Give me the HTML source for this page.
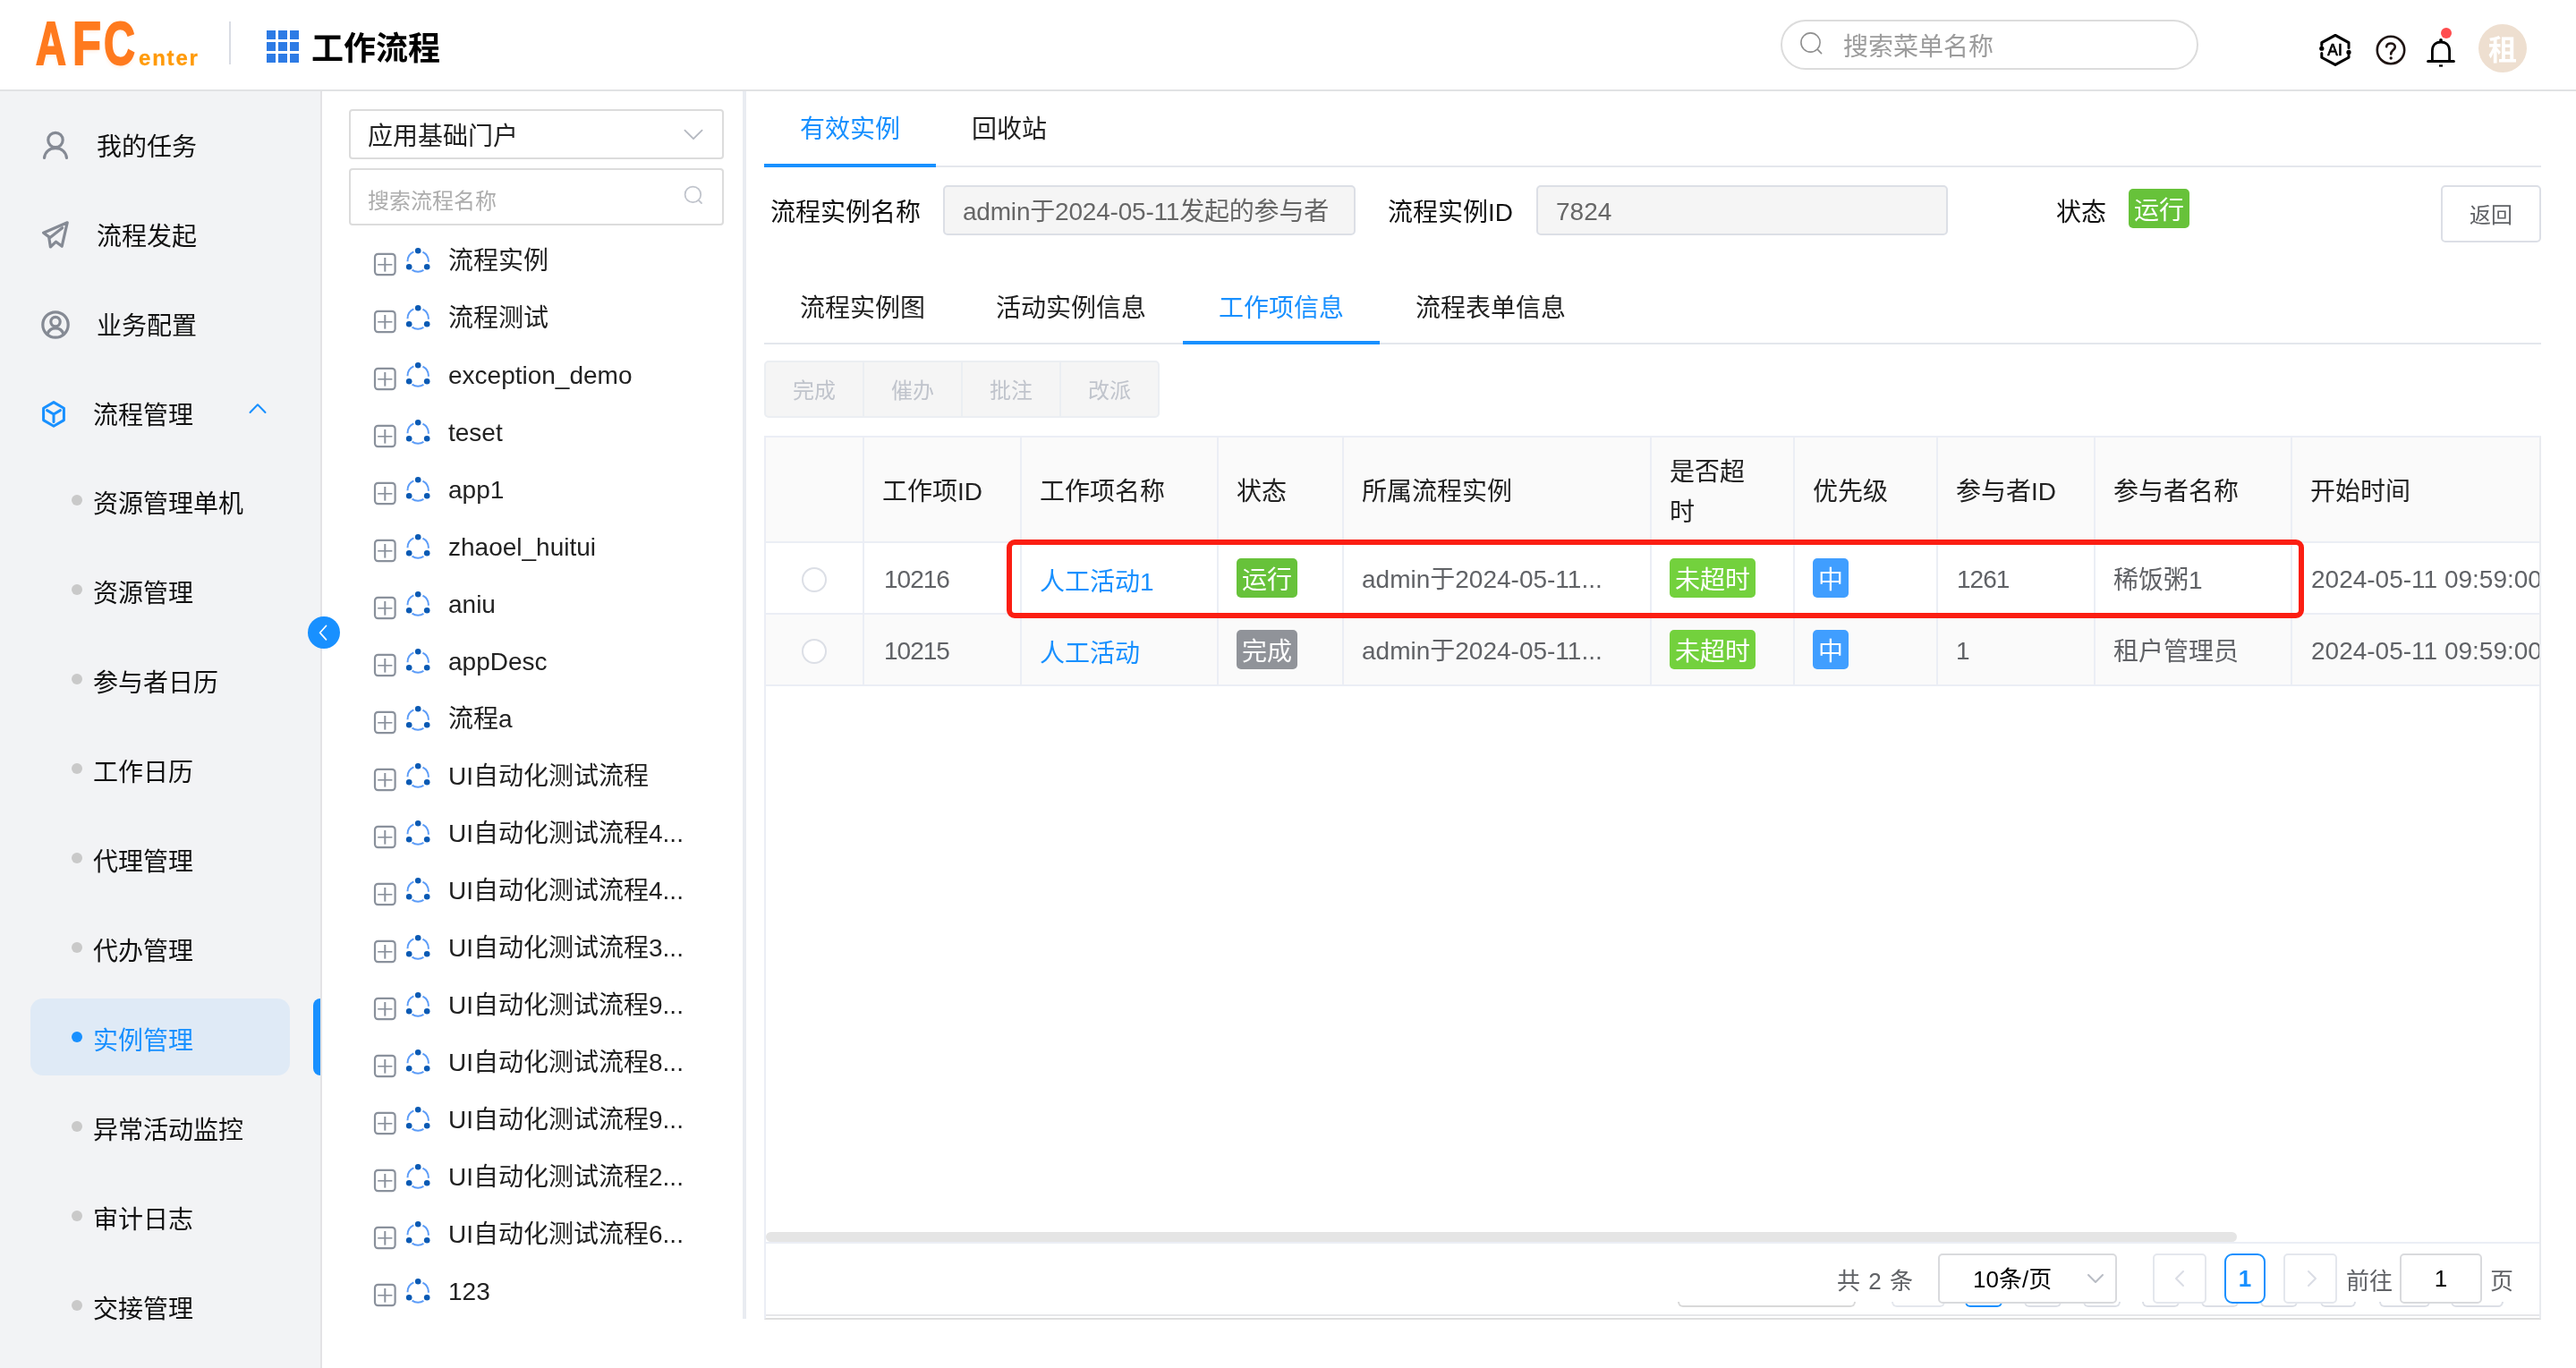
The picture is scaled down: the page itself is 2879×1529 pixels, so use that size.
<!DOCTYPE html>
<html lang="zh-CN">
<head>
<meta charset="utf-8">
<title>工作流程</title>
<style>
*{box-sizing:border-box;margin:0;padding:0}
html,body{width:2879px;height:1529px;overflow:hidden;background:#fff}
body{position:relative;font-family:"Liberation Sans","Noto Sans CJK SC",sans-serif;font-size:28px;color:#222;font-weight:400}
#wrap{position:absolute;left:0;top:0;width:2879px;height:1529px;overflow:hidden;will-change:transform}
.abs{position:absolute}
.t{position:absolute;white-space:nowrap;line-height:40px;height:40px}
/* header */
#hdr{position:absolute;left:0;top:0;width:2879px;height:102px;background:#fff;border-bottom:2px solid #e1e2e4}
#logo{position:absolute;left:0;top:0;width:240px;height:100px}
.lg{display:block;position:absolute;top:9px;font-size:69px;line-height:80px;font-weight:700;color:#ff7a1e;transform-origin:0 0;white-space:nowrap;-webkit-text-stroke:2px #ff7a1e;text-shadow:0 2px 5px rgba(255,122,30,.18)}
#lgA{left:39.5px;transform:scaleX(.68)}#lgF{left:80.8px;transform:scaleX(.76)}#lgC{left:116px;transform:scaleX(.70)}
#logo-enter{display:block;position:absolute;left:155px;top:49px;font-size:24px;line-height:32px;font-weight:700;color:#ff9a0a;letter-spacing:1.8px;white-space:nowrap;-webkit-text-stroke:.3px #ff9a0a}
#hdiv{position:absolute;left:256px;top:24px;width:2px;height:48px;background:#d9dce4}
#grid{position:absolute;left:298px;top:34px;width:36px;height:36px}
#title{position:absolute;left:348px;top:29px;font-size:36px;line-height:52px;font-weight:700;color:#000;white-space:nowrap}
#hsearch{position:absolute;left:1990px;top:22px;width:467px;height:56px;border:2px solid #dcdcdc;border-radius:28px;background:#fff}
#hsearch .ph{position:absolute;left:68px;top:9px;line-height:40px;font-size:28px;color:#9c9c9c;white-space:nowrap}
#avatar{position:absolute;left:2770px;top:27px;width:54px;height:54px;border-radius:50%;background:#eedfd0;color:#fff;font-weight:700;font-size:32px;line-height:58px;text-align:center}
/* sidebar */
#side{position:absolute;left:0;top:102px;width:360px;height:1427px;background:#f2f3f5;border-right:2px solid #e3e3e5}
.mi{margin-top:2px;position:absolute;left:108px;font-size:28px;line-height:40px;color:#111;white-space:nowrap}
.sub{margin-top:2px;position:absolute;left:104px;font-size:28px;line-height:40px;color:#111;white-space:nowrap}
.dot{position:absolute;left:80px;width:12px;height:12px;border-radius:50%;background:#c9c9c9}
#act{position:absolute;left:34px;top:1116px;width:290px;height:86px;border-radius:14px;background:#dfeaf6}
#actbar{position:absolute;left:350px;top:1116px;width:8px;height:86px;border-radius:8px 0 0 8px;background:#1890ff}
#collapse{position:absolute;left:344px;top:689px;width:36px;height:36px;border-radius:50%;background:#1890ff}
/* tree panel */
#tree{position:absolute;left:362px;top:102px;width:472px;height:1372px;background:#fff;border-right:4px solid #e9ecf1}
#sel{position:absolute;left:390px;top:122px;width:419px;height:56px;border:2px solid #dcdcdc;border-radius:4px;background:#fff}
#sel span{position:absolute;left:19px;top:9px;line-height:40px;font-size:28px;color:#222;white-space:nowrap}
#tsearch{position:absolute;left:390px;top:188px;width:419px;height:64px;border:2px solid #dcdcdc;border-radius:4px;background:#fff}
#tsearch span{position:absolute;left:19px;top:15px;line-height:40px;font-size:24px;color:#adadad;white-space:nowrap}
.ti{position:absolute;left:417px;width:400px;height:40px}
.ti .lb{position:absolute;left:84px;top:1px;line-height:40px;font-size:28px;color:#222;white-space:nowrap}
.ti svg{position:absolute;left:0;top:0}
/* main */
.tab{margin-top:2px;position:absolute;font-size:28px;line-height:40px;color:#222;white-space:nowrap}
.blue{color:#1890ff}
.hl{position:absolute;height:2px;background:#e4e7ed}
.bar{position:absolute;height:4px;background:#1890ff}
.lab{margin-top:2px;position:absolute;font-size:28px;line-height:40px;color:#111;white-space:nowrap}
.inp{position:absolute;top:207px;height:56px;border:2px solid #dcdfe6;border-radius:5px;background:#f5f5f5;overflow:hidden}
.inp span{position:absolute;left:20px;top:8px;font-size:28px;line-height:40px;color:#666;white-space:nowrap}
.tag{position:absolute;height:44px;border-radius:5px;color:#fff;font-size:28px;line-height:49px;overflow:hidden;text-align:center;white-space:nowrap}
.g{background:#67c23a}.g2{background:#73d13d}.gr{background:#909399}.b{background:#409eff}
#back{position:absolute;left:2728px;top:207px;width:112px;height:64px;border:2px solid #dcdfe6;border-radius:5px;background:#fff;color:#606266;font-size:24px;line-height:63px;text-align:center}
#btns{position:absolute;left:854px;top:403px;width:442px;height:64px;border:2px solid #ebeef2;border-radius:5px;background:#f5f5f5;display:flex}
#btns div{flex:1;border-right:2px solid #ebeef2;color:#c0c4cc;font-size:24px;line-height:63px;text-align:center}
#btns div:last-child{border-right:none}
/* table */
#tbl{position:absolute;left:854px;top:487px;width:1986px;height:988px;border:2px solid #ebeef5;border-right-color:#e9ebef;border-bottom-color:#dedede;overflow:hidden;background:#fff}
.row{position:absolute;left:0;width:2400px;border-bottom:2px solid #ebeef5}
.c{position:absolute;top:0;height:100%;border-right:2px solid #ebeef5}
.c span{position:absolute;left:20px;white-space:nowrap;font-size:28px;line-height:40px}
.hd .c span{color:#222}
.bd .c span{color:#606266}
.radio{position:absolute;left:40px;top:27px;width:28px;height:28px;border-radius:50%;border:2px solid #dcdfe6;background:#fff}
#red{position:absolute;left:1125px;top:603px;width:1450px;height:88px;border:6px solid #fb1e12;border-radius:9px}
/* pagination */
.pg{position:absolute;top:1401px;height:56px;border:2px solid #dcdfe6;border-radius:5px;background:#fff}
.pt{position:absolute;top:1412px;font-size:26px;line-height:40px;color:#606266;white-space:nowrap;word-spacing:2px}

</style>
</head>
<body>
<div id="wrap">

<div id="hdr">
  <div id="logo"><span class="lg" id="lgA">A</span><span class="lg" id="lgF">F</span><span class="lg" id="lgC">C</span><span id="logo-enter">enter</span></div>
  <div id="hdiv"></div>
  <svg id="grid" viewBox="0 0 36 36" fill="#2d7be5"><rect x="0" y="0" width="10" height="10"/><rect x="13" y="0" width="10" height="10"/><rect x="26" y="0" width="10" height="10"/><rect x="0" y="13" width="10" height="10"/><rect x="13" y="13" width="10" height="10"/><rect x="26" y="13" width="10" height="10"/><rect x="0" y="26" width="10" height="10"/><rect x="13" y="26" width="10" height="10"/><rect x="26" y="26" width="10" height="10"/></svg>
  <div id="title">工作流程</div>
  <div id="hsearch">
    <svg class="abs" style="left:18.5px;top:11px" width="28" height="28" viewBox="0 0 28 28" fill="none" stroke="#8f8f8f" stroke-width="1.6"><circle cx="12.5" cy="12.5" r="10.6"/><path d="M20.4 20.4 L24.6 24.6" stroke-linecap="round"/></svg>
    <span class="ph">搜索菜单名称</span>
  </div>
  <!-- AI icon -->
  <svg class="abs" style="left:2588px;top:34px" width="44" height="44" viewBox="0 0 44 44" fill="none" stroke="#000" stroke-width="3" stroke-linecap="round" stroke-linejoin="round">
    <path d="M6.8 16.5 V13.6 L22 5.4 L37 13.6 V19.5"/>
    <path d="M37 28 V30.2 L22 38.4 L6.8 30.2 V25.5"/>
    <circle cx="6.8" cy="20.2" r="2.6" fill="#000" stroke="none"/>
    <circle cx="37" cy="24.4" r="2.6" fill="#000" stroke="none"/>
    <text x="21.6" y="28.2" text-anchor="middle" font-family="Liberation Sans, sans-serif" font-size="18" font-weight="400" fill="#000" stroke="#000" stroke-width=".7" textLength="16.5" lengthAdjust="spacingAndGlyphs">AI</text>
  </svg>
  <!-- help icon -->
  <svg class="abs" style="left:2654px;top:38px" width="36" height="36" viewBox="0 0 36 36" fill="none" stroke="#1f1412" stroke-width="2.6" stroke-linecap="round" stroke-linejoin="round">
    <circle cx="18" cy="18" r="15.2"/>
    <path d="M13.2 14.2 C13.2 9.2 22.8 9.2 22.8 14.4 C22.8 18.2 18.2 18 18.2 22.4"/>
    <circle cx="18.2" cy="27" r="1.7" fill="#1f1412" stroke="none"/>
  </svg>
  <!-- bell -->
  <svg class="abs" style="left:2708px;top:28px" width="40" height="50" viewBox="0 0 40 50" fill="none" stroke="#000" stroke-width="2.8" stroke-linejoin="round">
    <path d="M10.4 40 V28.6 C10.4 22.6 14.4 19 20 19 C25.6 19 29.6 22.6 29.6 28.6 V40"/>
    <path d="M5.6 40.5 H34.4" stroke-width="3" stroke-linecap="round"/>
    <path d="M18 45.5 H22" stroke-width="2.2"/>
    <circle cx="20" cy="17" r="1.9" fill="#000" stroke="none"/>
    <circle cx="26" cy="9" r="6" fill="#ff4d4f" stroke="none"/>
  </svg>
  <div id="avatar">租</div>
</div>

<div id="side"></div>

<svg class="abs" style="left:44px;top:143px" width="36" height="38" viewBox="0 0 36 38" fill="none" stroke="#858a94" stroke-width="3.2" stroke-linecap="round">
  <circle cx="18" cy="13.5" r="8.2"/>
  <path d="M5.5 33.5 C6.5 26.5 11.5 22.6 18 22.6 C24.5 22.6 29.5 26.5 30.5 33.5"/>
</svg>
<svg class="abs" style="left:44px;top:244px" width="36" height="38" viewBox="0 0 36 38" fill="none" stroke="#858a94" stroke-width="3.2" stroke-linecap="round" stroke-linejoin="round">
  <path d="M31.2 4.8 L4.6 16.2 L10.6 20.6 L12.4 32 L18.6 26.2 L25.2 31.2 Z"/>
  <path d="M12 21.4 L25.6 10.8"/>
</svg>
<svg class="abs" style="left:44px;top:345px" width="36" height="36" viewBox="0 0 36 36" fill="none" stroke="#858a94" stroke-width="3.2" stroke-linecap="round">
  <circle cx="18" cy="18" r="14.2"/>
  <circle cx="18" cy="14.6" r="5.2"/>
  <path d="M9 28.6 C10.4 23.4 13.6 21.8 18 21.8 C22.4 21.8 25.6 23.4 27 28.6"/>
</svg>
<svg class="abs" style="left:44px;top:446px" width="32" height="34" viewBox="0 0 32 34" fill="none" stroke="#1890ff" stroke-width="3" stroke-linecap="round" stroke-linejoin="round">
  <path d="M16 3.6 L27.4 10.2 V23.6 L16 30.2 L4.6 23.6 V10.2 Z"/>
  <path d="M8.6 12.6 L16 17 L23.4 12.6 M16 17 V25.6"/>
</svg>
<svg class="abs" style="left:277px;top:448px" width="22" height="16" viewBox="0 0 22 16" fill="none" stroke="#1890ff" stroke-width="2" stroke-linecap="round" stroke-linejoin="round">
  <path d="M2.5 13 L11 4.2 L19.5 13"/>
</svg>

<div class="mi" style="left:108px;top:143px">我的任务</div>
<div class="mi" style="left:108px;top:243px">流程发起</div>
<div class="mi" style="left:108px;top:343px">业务配置</div>
<div class="mi" style="left:104px;top:443px">流程管理</div>
<div id="act"></div><div id="actbar"></div>
<div class="dot" style="top:553px"></div>
<div class="sub" style="top:542px">资源管理单机</div>
<div class="dot" style="top:653px"></div>
<div class="sub" style="top:642px">资源管理</div>
<div class="dot" style="top:753px"></div>
<div class="sub" style="top:742px">参与者日历</div>
<div class="dot" style="top:853px"></div>
<div class="sub" style="top:842px">工作日历</div>
<div class="dot" style="top:953px"></div>
<div class="sub" style="top:942px">代理管理</div>
<div class="dot" style="top:1053px"></div>
<div class="sub" style="top:1042px">代办管理</div>
<div class="dot" style="top:1153px;background:#1890ff"></div>
<div class="sub blue" style="top:1142px">实例管理</div>
<div class="dot" style="top:1253px"></div>
<div class="sub" style="top:1242px">异常活动监控</div>
<div class="dot" style="top:1353px"></div>
<div class="sub" style="top:1342px">审计日志</div>
<div class="dot" style="top:1453px"></div>
<div class="sub" style="top:1442px">交接管理</div>
<div id="tree"></div>
<div id="sel"><span>应用基础门户</span>
<svg class="abs" style="left:371px;top:19px" width="24" height="16" viewBox="0 0 24 16" fill="none" stroke="#b4b8c0" stroke-width="1.8" stroke-linecap="round" stroke-linejoin="round"><path d="M2.4 2.6 L12 12.2 L21.6 2.6"/></svg></div>
<div id="tsearch"><span>搜索流程名称</span>
<svg class="abs" style="left:371px;top:16px" width="26" height="26" viewBox="0 0 26 26" fill="none" stroke="#c0c4cc" stroke-width="1.8" stroke-linecap="round"><circle cx="11.4" cy="11.4" r="8.8"/><path d="M17.8 17.8 L21 21"/></svg></div>
<div class="ti" style="top:271px"><svg width="70" height="40" viewBox="0 0 70 40" fill="none">
<rect x="2" y="12.8" width="22.6" height="23.4" rx="3.6" stroke="#8a919c" stroke-width="2.2"/>
<path d="M13.3 17 V32.6" stroke="#8a919c" stroke-width="2"/><path d="M5.2 24.8 H21.4" stroke="#8a919c" stroke-width="1.6"/>
<circle cx="50.2" cy="21" r="11.7" stroke="#5c9cf8" stroke-width="2" stroke-dasharray="13.6 10.9" stroke-dashoffset="-5.45" transform="rotate(-90 50.2 21)"/>
<circle cx="50.2" cy="9.3" r="3.3" fill="#0a5ab4"/><circle cx="40.2" cy="27.2" r="3.3" fill="#0a5ab4"/><circle cx="60.2" cy="27.2" r="3.3" fill="#0a5ab4"/>
</svg><span class="lb">流程实例</span></div>
<div class="ti" style="top:335px"><svg width="70" height="40" viewBox="0 0 70 40" fill="none">
<rect x="2" y="12.8" width="22.6" height="23.4" rx="3.6" stroke="#8a919c" stroke-width="2.2"/>
<path d="M13.3 17 V32.6" stroke="#8a919c" stroke-width="2"/><path d="M5.2 24.8 H21.4" stroke="#8a919c" stroke-width="1.6"/>
<circle cx="50.2" cy="21" r="11.7" stroke="#5c9cf8" stroke-width="2" stroke-dasharray="13.6 10.9" stroke-dashoffset="-5.45" transform="rotate(-90 50.2 21)"/>
<circle cx="50.2" cy="9.3" r="3.3" fill="#0a5ab4"/><circle cx="40.2" cy="27.2" r="3.3" fill="#0a5ab4"/><circle cx="60.2" cy="27.2" r="3.3" fill="#0a5ab4"/>
</svg><span class="lb">流程测试</span></div>
<div class="ti" style="top:399px"><svg width="70" height="40" viewBox="0 0 70 40" fill="none">
<rect x="2" y="12.8" width="22.6" height="23.4" rx="3.6" stroke="#8a919c" stroke-width="2.2"/>
<path d="M13.3 17 V32.6" stroke="#8a919c" stroke-width="2"/><path d="M5.2 24.8 H21.4" stroke="#8a919c" stroke-width="1.6"/>
<circle cx="50.2" cy="21" r="11.7" stroke="#5c9cf8" stroke-width="2" stroke-dasharray="13.6 10.9" stroke-dashoffset="-5.45" transform="rotate(-90 50.2 21)"/>
<circle cx="50.2" cy="9.3" r="3.3" fill="#0a5ab4"/><circle cx="40.2" cy="27.2" r="3.3" fill="#0a5ab4"/><circle cx="60.2" cy="27.2" r="3.3" fill="#0a5ab4"/>
</svg><span class="lb">exception_demo</span></div>
<div class="ti" style="top:463px"><svg width="70" height="40" viewBox="0 0 70 40" fill="none">
<rect x="2" y="12.8" width="22.6" height="23.4" rx="3.6" stroke="#8a919c" stroke-width="2.2"/>
<path d="M13.3 17 V32.6" stroke="#8a919c" stroke-width="2"/><path d="M5.2 24.8 H21.4" stroke="#8a919c" stroke-width="1.6"/>
<circle cx="50.2" cy="21" r="11.7" stroke="#5c9cf8" stroke-width="2" stroke-dasharray="13.6 10.9" stroke-dashoffset="-5.45" transform="rotate(-90 50.2 21)"/>
<circle cx="50.2" cy="9.3" r="3.3" fill="#0a5ab4"/><circle cx="40.2" cy="27.2" r="3.3" fill="#0a5ab4"/><circle cx="60.2" cy="27.2" r="3.3" fill="#0a5ab4"/>
</svg><span class="lb">teset</span></div>
<div class="ti" style="top:527px"><svg width="70" height="40" viewBox="0 0 70 40" fill="none">
<rect x="2" y="12.8" width="22.6" height="23.4" rx="3.6" stroke="#8a919c" stroke-width="2.2"/>
<path d="M13.3 17 V32.6" stroke="#8a919c" stroke-width="2"/><path d="M5.2 24.8 H21.4" stroke="#8a919c" stroke-width="1.6"/>
<circle cx="50.2" cy="21" r="11.7" stroke="#5c9cf8" stroke-width="2" stroke-dasharray="13.6 10.9" stroke-dashoffset="-5.45" transform="rotate(-90 50.2 21)"/>
<circle cx="50.2" cy="9.3" r="3.3" fill="#0a5ab4"/><circle cx="40.2" cy="27.2" r="3.3" fill="#0a5ab4"/><circle cx="60.2" cy="27.2" r="3.3" fill="#0a5ab4"/>
</svg><span class="lb">app1</span></div>
<div class="ti" style="top:591px"><svg width="70" height="40" viewBox="0 0 70 40" fill="none">
<rect x="2" y="12.8" width="22.6" height="23.4" rx="3.6" stroke="#8a919c" stroke-width="2.2"/>
<path d="M13.3 17 V32.6" stroke="#8a919c" stroke-width="2"/><path d="M5.2 24.8 H21.4" stroke="#8a919c" stroke-width="1.6"/>
<circle cx="50.2" cy="21" r="11.7" stroke="#5c9cf8" stroke-width="2" stroke-dasharray="13.6 10.9" stroke-dashoffset="-5.45" transform="rotate(-90 50.2 21)"/>
<circle cx="50.2" cy="9.3" r="3.3" fill="#0a5ab4"/><circle cx="40.2" cy="27.2" r="3.3" fill="#0a5ab4"/><circle cx="60.2" cy="27.2" r="3.3" fill="#0a5ab4"/>
</svg><span class="lb">zhaoel_huitui</span></div>
<div class="ti" style="top:655px"><svg width="70" height="40" viewBox="0 0 70 40" fill="none">
<rect x="2" y="12.8" width="22.6" height="23.4" rx="3.6" stroke="#8a919c" stroke-width="2.2"/>
<path d="M13.3 17 V32.6" stroke="#8a919c" stroke-width="2"/><path d="M5.2 24.8 H21.4" stroke="#8a919c" stroke-width="1.6"/>
<circle cx="50.2" cy="21" r="11.7" stroke="#5c9cf8" stroke-width="2" stroke-dasharray="13.6 10.9" stroke-dashoffset="-5.45" transform="rotate(-90 50.2 21)"/>
<circle cx="50.2" cy="9.3" r="3.3" fill="#0a5ab4"/><circle cx="40.2" cy="27.2" r="3.3" fill="#0a5ab4"/><circle cx="60.2" cy="27.2" r="3.3" fill="#0a5ab4"/>
</svg><span class="lb">aniu</span></div>
<div class="ti" style="top:719px"><svg width="70" height="40" viewBox="0 0 70 40" fill="none">
<rect x="2" y="12.8" width="22.6" height="23.4" rx="3.6" stroke="#8a919c" stroke-width="2.2"/>
<path d="M13.3 17 V32.6" stroke="#8a919c" stroke-width="2"/><path d="M5.2 24.8 H21.4" stroke="#8a919c" stroke-width="1.6"/>
<circle cx="50.2" cy="21" r="11.7" stroke="#5c9cf8" stroke-width="2" stroke-dasharray="13.6 10.9" stroke-dashoffset="-5.45" transform="rotate(-90 50.2 21)"/>
<circle cx="50.2" cy="9.3" r="3.3" fill="#0a5ab4"/><circle cx="40.2" cy="27.2" r="3.3" fill="#0a5ab4"/><circle cx="60.2" cy="27.2" r="3.3" fill="#0a5ab4"/>
</svg><span class="lb">appDesc</span></div>
<div class="ti" style="top:783px"><svg width="70" height="40" viewBox="0 0 70 40" fill="none">
<rect x="2" y="12.8" width="22.6" height="23.4" rx="3.6" stroke="#8a919c" stroke-width="2.2"/>
<path d="M13.3 17 V32.6" stroke="#8a919c" stroke-width="2"/><path d="M5.2 24.8 H21.4" stroke="#8a919c" stroke-width="1.6"/>
<circle cx="50.2" cy="21" r="11.7" stroke="#5c9cf8" stroke-width="2" stroke-dasharray="13.6 10.9" stroke-dashoffset="-5.45" transform="rotate(-90 50.2 21)"/>
<circle cx="50.2" cy="9.3" r="3.3" fill="#0a5ab4"/><circle cx="40.2" cy="27.2" r="3.3" fill="#0a5ab4"/><circle cx="60.2" cy="27.2" r="3.3" fill="#0a5ab4"/>
</svg><span class="lb">流程a</span></div>
<div class="ti" style="top:847px"><svg width="70" height="40" viewBox="0 0 70 40" fill="none">
<rect x="2" y="12.8" width="22.6" height="23.4" rx="3.6" stroke="#8a919c" stroke-width="2.2"/>
<path d="M13.3 17 V32.6" stroke="#8a919c" stroke-width="2"/><path d="M5.2 24.8 H21.4" stroke="#8a919c" stroke-width="1.6"/>
<circle cx="50.2" cy="21" r="11.7" stroke="#5c9cf8" stroke-width="2" stroke-dasharray="13.6 10.9" stroke-dashoffset="-5.45" transform="rotate(-90 50.2 21)"/>
<circle cx="50.2" cy="9.3" r="3.3" fill="#0a5ab4"/><circle cx="40.2" cy="27.2" r="3.3" fill="#0a5ab4"/><circle cx="60.2" cy="27.2" r="3.3" fill="#0a5ab4"/>
</svg><span class="lb">UI自动化测试流程</span></div>
<div class="ti" style="top:911px"><svg width="70" height="40" viewBox="0 0 70 40" fill="none">
<rect x="2" y="12.8" width="22.6" height="23.4" rx="3.6" stroke="#8a919c" stroke-width="2.2"/>
<path d="M13.3 17 V32.6" stroke="#8a919c" stroke-width="2"/><path d="M5.2 24.8 H21.4" stroke="#8a919c" stroke-width="1.6"/>
<circle cx="50.2" cy="21" r="11.7" stroke="#5c9cf8" stroke-width="2" stroke-dasharray="13.6 10.9" stroke-dashoffset="-5.45" transform="rotate(-90 50.2 21)"/>
<circle cx="50.2" cy="9.3" r="3.3" fill="#0a5ab4"/><circle cx="40.2" cy="27.2" r="3.3" fill="#0a5ab4"/><circle cx="60.2" cy="27.2" r="3.3" fill="#0a5ab4"/>
</svg><span class="lb">UI自动化测试流程4...</span></div>
<div class="ti" style="top:975px"><svg width="70" height="40" viewBox="0 0 70 40" fill="none">
<rect x="2" y="12.8" width="22.6" height="23.4" rx="3.6" stroke="#8a919c" stroke-width="2.2"/>
<path d="M13.3 17 V32.6" stroke="#8a919c" stroke-width="2"/><path d="M5.2 24.8 H21.4" stroke="#8a919c" stroke-width="1.6"/>
<circle cx="50.2" cy="21" r="11.7" stroke="#5c9cf8" stroke-width="2" stroke-dasharray="13.6 10.9" stroke-dashoffset="-5.45" transform="rotate(-90 50.2 21)"/>
<circle cx="50.2" cy="9.3" r="3.3" fill="#0a5ab4"/><circle cx="40.2" cy="27.2" r="3.3" fill="#0a5ab4"/><circle cx="60.2" cy="27.2" r="3.3" fill="#0a5ab4"/>
</svg><span class="lb">UI自动化测试流程4...</span></div>
<div class="ti" style="top:1039px"><svg width="70" height="40" viewBox="0 0 70 40" fill="none">
<rect x="2" y="12.8" width="22.6" height="23.4" rx="3.6" stroke="#8a919c" stroke-width="2.2"/>
<path d="M13.3 17 V32.6" stroke="#8a919c" stroke-width="2"/><path d="M5.2 24.8 H21.4" stroke="#8a919c" stroke-width="1.6"/>
<circle cx="50.2" cy="21" r="11.7" stroke="#5c9cf8" stroke-width="2" stroke-dasharray="13.6 10.9" stroke-dashoffset="-5.45" transform="rotate(-90 50.2 21)"/>
<circle cx="50.2" cy="9.3" r="3.3" fill="#0a5ab4"/><circle cx="40.2" cy="27.2" r="3.3" fill="#0a5ab4"/><circle cx="60.2" cy="27.2" r="3.3" fill="#0a5ab4"/>
</svg><span class="lb">UI自动化测试流程3...</span></div>
<div class="ti" style="top:1103px"><svg width="70" height="40" viewBox="0 0 70 40" fill="none">
<rect x="2" y="12.8" width="22.6" height="23.4" rx="3.6" stroke="#8a919c" stroke-width="2.2"/>
<path d="M13.3 17 V32.6" stroke="#8a919c" stroke-width="2"/><path d="M5.2 24.8 H21.4" stroke="#8a919c" stroke-width="1.6"/>
<circle cx="50.2" cy="21" r="11.7" stroke="#5c9cf8" stroke-width="2" stroke-dasharray="13.6 10.9" stroke-dashoffset="-5.45" transform="rotate(-90 50.2 21)"/>
<circle cx="50.2" cy="9.3" r="3.3" fill="#0a5ab4"/><circle cx="40.2" cy="27.2" r="3.3" fill="#0a5ab4"/><circle cx="60.2" cy="27.2" r="3.3" fill="#0a5ab4"/>
</svg><span class="lb">UI自动化测试流程9...</span></div>
<div class="ti" style="top:1167px"><svg width="70" height="40" viewBox="0 0 70 40" fill="none">
<rect x="2" y="12.8" width="22.6" height="23.4" rx="3.6" stroke="#8a919c" stroke-width="2.2"/>
<path d="M13.3 17 V32.6" stroke="#8a919c" stroke-width="2"/><path d="M5.2 24.8 H21.4" stroke="#8a919c" stroke-width="1.6"/>
<circle cx="50.2" cy="21" r="11.7" stroke="#5c9cf8" stroke-width="2" stroke-dasharray="13.6 10.9" stroke-dashoffset="-5.45" transform="rotate(-90 50.2 21)"/>
<circle cx="50.2" cy="9.3" r="3.3" fill="#0a5ab4"/><circle cx="40.2" cy="27.2" r="3.3" fill="#0a5ab4"/><circle cx="60.2" cy="27.2" r="3.3" fill="#0a5ab4"/>
</svg><span class="lb">UI自动化测试流程8...</span></div>
<div class="ti" style="top:1231px"><svg width="70" height="40" viewBox="0 0 70 40" fill="none">
<rect x="2" y="12.8" width="22.6" height="23.4" rx="3.6" stroke="#8a919c" stroke-width="2.2"/>
<path d="M13.3 17 V32.6" stroke="#8a919c" stroke-width="2"/><path d="M5.2 24.8 H21.4" stroke="#8a919c" stroke-width="1.6"/>
<circle cx="50.2" cy="21" r="11.7" stroke="#5c9cf8" stroke-width="2" stroke-dasharray="13.6 10.9" stroke-dashoffset="-5.45" transform="rotate(-90 50.2 21)"/>
<circle cx="50.2" cy="9.3" r="3.3" fill="#0a5ab4"/><circle cx="40.2" cy="27.2" r="3.3" fill="#0a5ab4"/><circle cx="60.2" cy="27.2" r="3.3" fill="#0a5ab4"/>
</svg><span class="lb">UI自动化测试流程9...</span></div>
<div class="ti" style="top:1295px"><svg width="70" height="40" viewBox="0 0 70 40" fill="none">
<rect x="2" y="12.8" width="22.6" height="23.4" rx="3.6" stroke="#8a919c" stroke-width="2.2"/>
<path d="M13.3 17 V32.6" stroke="#8a919c" stroke-width="2"/><path d="M5.2 24.8 H21.4" stroke="#8a919c" stroke-width="1.6"/>
<circle cx="50.2" cy="21" r="11.7" stroke="#5c9cf8" stroke-width="2" stroke-dasharray="13.6 10.9" stroke-dashoffset="-5.45" transform="rotate(-90 50.2 21)"/>
<circle cx="50.2" cy="9.3" r="3.3" fill="#0a5ab4"/><circle cx="40.2" cy="27.2" r="3.3" fill="#0a5ab4"/><circle cx="60.2" cy="27.2" r="3.3" fill="#0a5ab4"/>
</svg><span class="lb">UI自动化测试流程2...</span></div>
<div class="ti" style="top:1359px"><svg width="70" height="40" viewBox="0 0 70 40" fill="none">
<rect x="2" y="12.8" width="22.6" height="23.4" rx="3.6" stroke="#8a919c" stroke-width="2.2"/>
<path d="M13.3 17 V32.6" stroke="#8a919c" stroke-width="2"/><path d="M5.2 24.8 H21.4" stroke="#8a919c" stroke-width="1.6"/>
<circle cx="50.2" cy="21" r="11.7" stroke="#5c9cf8" stroke-width="2" stroke-dasharray="13.6 10.9" stroke-dashoffset="-5.45" transform="rotate(-90 50.2 21)"/>
<circle cx="50.2" cy="9.3" r="3.3" fill="#0a5ab4"/><circle cx="40.2" cy="27.2" r="3.3" fill="#0a5ab4"/><circle cx="60.2" cy="27.2" r="3.3" fill="#0a5ab4"/>
</svg><span class="lb">UI自动化测试流程6...</span></div>
<div class="ti" style="top:1423px"><svg width="70" height="40" viewBox="0 0 70 40" fill="none">
<rect x="2" y="12.8" width="22.6" height="23.4" rx="3.6" stroke="#8a919c" stroke-width="2.2"/>
<path d="M13.3 17 V32.6" stroke="#8a919c" stroke-width="2"/><path d="M5.2 24.8 H21.4" stroke="#8a919c" stroke-width="1.6"/>
<circle cx="50.2" cy="21" r="11.7" stroke="#5c9cf8" stroke-width="2" stroke-dasharray="13.6 10.9" stroke-dashoffset="-5.45" transform="rotate(-90 50.2 21)"/>
<circle cx="50.2" cy="9.3" r="3.3" fill="#0a5ab4"/><circle cx="40.2" cy="27.2" r="3.3" fill="#0a5ab4"/><circle cx="60.2" cy="27.2" r="3.3" fill="#0a5ab4"/>
</svg><span class="lb">123</span></div>
<div id="collapse"><svg class="abs" style="left:10px;top:8px" width="14" height="20" viewBox="0 0 14 20" fill="none" stroke="#fff" stroke-width="1.7" stroke-linecap="round" stroke-linejoin="round"><path d="M10.5 2.5 L3.5 10.2 L10.5 17.8"/></svg></div>

<div class="tab blue" style="left:894px;top:123px">有效实例</div>
<div class="tab" style="left:1086px;top:123px">回收站</div>
<div class="hl" style="left:854px;top:185px;width:1986px"></div>
<div class="bar" style="left:854px;top:183px;width:192px"></div>

<div class="lab" style="left:861px;top:216px">流程实例名称</div>
<div class="inp" style="left:1054px;width:461px"><span style="letter-spacing:-.2px">admin于2024-05-11发起的参与者</span></div>
<div class="lab" style="left:1551px;top:216px">流程实例ID</div>
<div class="inp" style="left:1717px;width:460px"><span>7824</span></div>
<div class="lab" style="left:2298px;top:216px">状态</div>
<div class="tag g" style="left:2379px;top:211px;width:68px">运行</div>
<div id="back">返回</div>

<div class="tab" style="left:894px;top:323px">流程实例图</div>
<div class="tab" style="left:1113px;top:323px">活动实例信息</div>
<div class="tab blue" style="left:1362px;top:323px">工作项信息</div>
<div class="tab" style="left:1582px;top:323px">流程表单信息</div>
<div class="hl" style="left:854px;top:383px;width:1986px"></div>
<div class="bar" style="left:1322px;top:381px;width:220px"></div>

<div id="btns"><div>完成</div><div>催办</div><div>批注</div><div>改派</div></div>

<div id="tbl">
<div class="row hd" style="top:0px;height:118px;background:#fafafa">
<div class="c" style="left:0px;width:110px"></div>
<div class="c" style="left:110px;width:176px"><span style="top:41px;">工作项ID</span></div>
<div class="c" style="left:286px;width:220px"><span style="top:41px;">工作项名称</span></div>
<div class="c" style="left:506px;width:140px"><span style="top:41px;">状态</span></div>
<div class="c" style="left:646px;width:344px"><span style="top:41px;">所属流程实例</span></div>
<div class="c" style="left:990px;width:160px"><span style="top:16px;line-height:45px;white-space:normal;width:100px">是否超时</span></div>
<div class="c" style="left:1150px;width:160px"><span style="top:41px;">优先级</span></div>
<div class="c" style="left:1310px;width:176px"><span style="top:41px;">参与者ID</span></div>
<div class="c" style="left:1486px;width:220px"><span style="top:41px;">参与者名称</span></div>
<div class="c" style="left:1706px;width:300px"><span style="top:41px;">开始时间</span></div>
</div>
<div class="row bd" style="top:118px;height:80px;background:#fff">
<div class="c" style="left:0px;width:110px"><div class="radio"></div></div>
<div class="c" style="left:110px;width:176px"><span style="top:21px;letter-spacing:-1px;left:22px">10216</span></div>
<div class="c" style="left:286px;width:220px"><span style="top:24px;color:#1890ff">人工活动1</span></div>
<div class="c" style="left:506px;width:140px"><div class="tag g" style="left:20px;top:17px;width:68px">运行</div></div>
<div class="c" style="left:646px;width:344px"><span style="top:21px;">admin于2024-05-11...</span></div>
<div class="c" style="left:990px;width:160px"><div class="tag g2" style="left:20px;top:17px;width:96px">未超时</div></div>
<div class="c" style="left:1150px;width:160px"><div class="tag b" style="left:20px;top:17px;width:40px">中</div></div>
<div class="c" style="left:1310px;width:176px"><span style="top:21px;letter-spacing:-1px;left:21px">1261</span></div>
<div class="c" style="left:1486px;width:220px"><span style="top:22px;">稀饭粥1</span></div>
<div class="c" style="left:1706px;width:300px"><span style="top:21px;left:21px">2024-05-11 09:59:00</span></div>
</div>
<div class="row bd" style="top:198px;height:80px;background:#fafafa">
<div class="c" style="left:0px;width:110px"><div class="radio"></div></div>
<div class="c" style="left:110px;width:176px"><span style="top:21px;letter-spacing:-1px;left:22px">10215</span></div>
<div class="c" style="left:286px;width:220px"><span style="top:24px;color:#1890ff">人工活动</span></div>
<div class="c" style="left:506px;width:140px"><div class="tag gr" style="left:20px;top:17px;width:68px">完成</div></div>
<div class="c" style="left:646px;width:344px"><span style="top:21px;">admin于2024-05-11...</span></div>
<div class="c" style="left:990px;width:160px"><div class="tag g2" style="left:20px;top:17px;width:96px">未超时</div></div>
<div class="c" style="left:1150px;width:160px"><div class="tag b" style="left:20px;top:17px;width:40px">中</div></div>
<div class="c" style="left:1310px;width:176px"><span style="top:21px;">1</span></div>
<div class="c" style="left:1486px;width:220px"><span style="top:22px;">租户管理员</span></div>
<div class="c" style="left:1706px;width:300px"><span style="top:21px;left:21px">2024-05-11 09:59:00</span></div>
</div>
<div class="abs" style="left:0;top:888px;width:1644px;height:11px;border-radius:6px;background:#e5e5e5"></div>
<div class="abs" style="left:0;top:899px;width:1986px;height:2px;background:#ebeef5"></div>
<div class="abs" style="left:0;top:980px;width:1986px;height:2px;background:#e6e7ea"></div>
</div>
<div id="red"></div>
<div class="abs" style="left:1875px;top:1455px;width:199px;height:6px;border:2px solid #d9d9d9;border-top:none;border-radius:0 0 8px 8px"></div>
<div class="abs" style="left:2114px;top:1455px;width:60px;height:6px;border:2px solid #e4e7ed;border-top:none;border-radius:0 0 8px 8px"></div>
<div class="abs" style="left:2196px;top:1455px;width:42px;height:6px;border:2px solid #1890ff;border-top:none;border-radius:0 0 8px 8px"></div>
<div class="abs" style="left:2262px;top:1455px;width:42px;height:6px;border:2px solid #dcdfe6;border-top:none;border-radius:0 0 8px 8px"></div>
<div class="abs" style="left:2328px;top:1455px;width:42px;height:6px;border:2px solid #dcdfe6;border-top:none;border-radius:0 0 8px 8px"></div>
<div class="abs" style="left:2394px;top:1455px;width:42px;height:6px;border:2px solid #dcdfe6;border-top:none;border-radius:0 0 8px 8px"></div>
<div class="abs" style="left:2460px;top:1455px;width:42px;height:6px;border:2px solid #dcdfe6;border-top:none;border-radius:0 0 8px 8px"></div>
<div class="abs" style="left:2526px;top:1455px;width:42px;height:6px;border:2px solid #dcdfe6;border-top:none;border-radius:0 0 8px 8px"></div>
<div class="abs" style="left:2593px;top:1455px;width:40px;height:6px;border:2px solid #dcdfe6;border-top:none;border-radius:0 0 8px 8px"></div>
<div class="abs" style="left:2659px;top:1455px;width:57px;height:6px;border:2px solid #dcdfe6;border-top:none;border-radius:0 0 8px 8px"></div>
<div class="abs" style="left:2739px;top:1455px;width:59px;height:6px;border:2px solid #dcdfe6;border-top:none;border-radius:0 0 8px 8px"></div>

<div class="pt" style="left:2053px">共 2 条</div>
<div class="pg" style="left:2166px;width:200px;border-color:#d9dadd"><span class="abs" style="left:37px;top:7px;font-size:26px;line-height:40px;color:#000;white-space:nowrap">10条/页</span>
<svg class="abs" style="left:163px;top:19px" width="22" height="14" viewBox="0 0 22 14" fill="none" stroke="#b8bcc4" stroke-width="2" stroke-linecap="round" stroke-linejoin="round"><path d="M3 3 L11 11 L19 3"/></svg></div>
<div class="pg" style="left:2406px;width:60px;border-color:#e4e7ed"><svg class="abs" style="left:20px;top:15px" width="16" height="22" viewBox="0 0 16 22" fill="none" stroke="#dadde5" stroke-width="2" stroke-linecap="round" stroke-linejoin="round"><path d="M12 3 L4 11 L12 19"/></svg></div>
<div class="pg" style="left:2486px;width:46px;border-color:#1890ff;border-radius:9px;color:#1890ff;font-weight:700;font-size:26px;line-height:53px;text-align:center">1</div>
<div class="pg" style="left:2552px;width:60px;border-color:#e4e7ed"><svg class="abs" style="left:22px;top:15px" width="16" height="22" viewBox="0 0 16 22" fill="none" stroke="#dadde5" stroke-width="2" stroke-linecap="round" stroke-linejoin="round"><path d="M4 3 L12 11 L4 19"/></svg></div>
<div class="pt" style="left:2622px">前往</div>
<div class="pg" style="left:2682px;width:92px;border-color:#d9dadd;color:#000;font-size:26px;line-height:53px;text-align:center">1</div>
<div class="pt" style="left:2783px">页</div>

</div>
</body>
</html>
